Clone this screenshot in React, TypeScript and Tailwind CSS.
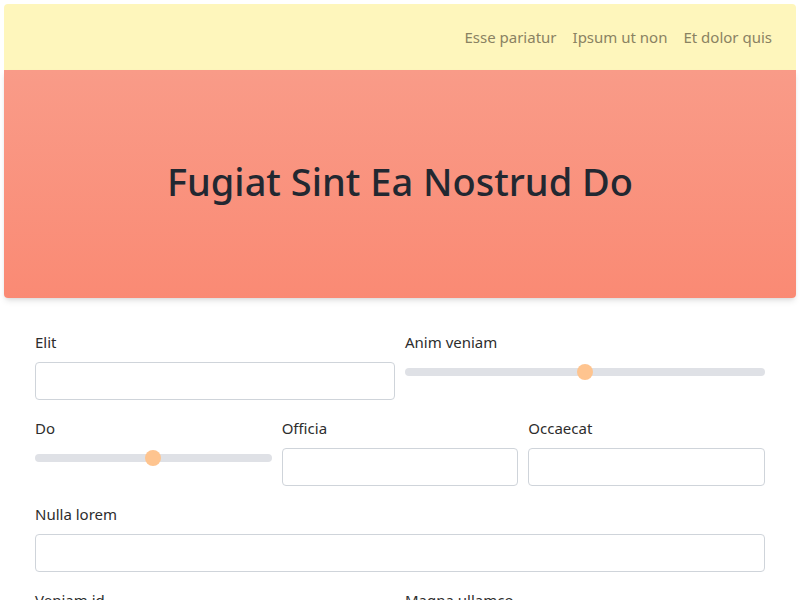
const font = { fontFamily: '"Noto Sans", "Open Sans", sans-serif' };

function Label({ children }: { children: string }) {
  return <label className="block text-[15px] leading-5 text-[#2d2d2d] mb-[10px]">{children}</label>;
}

function TextField({ label }: { label: string }) {
  return (
    <div>
      <Label>{label}</Label>
      <input className="block w-full h-[38px] rounded border border-[#cfd4da] bg-white" />
    </div>
  );
}

function Slider({ label, pct = 50 }: { label: string; pct?: number }) {
  return (
    <div>
      <Label>{label}</Label>
      <div className="relative h-5 flex items-center">
        <div className="h-2 w-full rounded-full bg-[#dfe1e6]" />
        <div
          className="absolute w-4 h-4 rounded-full bg-[#fec48f] -translate-x-1/2"
          style={{ left: `${pct}%` }}
        />
      </div>
    </div>
  );
}

export default function App() {
  return (
    <div className="min-h-[600px] bg-white p-1" style={font}>
      <nav className="h-[66px] bg-[#fef6bc] rounded-t flex items-center justify-end gap-4 pr-6 text-[15px] text-[#8a8262]">
        <a>Esse pariatur</a>
        <a>Ipsum ut non</a>
        <a>Et dolor quis</a>
      </nav>
      <header className="h-[228px] rounded-b bg-gradient-to-b from-[#f99b88] to-[#fa8a74] shadow-md flex items-center justify-center">
        <h1 className="text-[38px] font-medium text-[#222831] leading-none pb-[7px]">Fugiat Sint Ea Nostrud Do</h1>
      </header>
      <form className="px-[31px] pt-[34px] flex flex-col gap-[18px]">
        <div className="grid grid-cols-2 gap-[10px]">
          <TextField label="Elit" />
          <Slider label="Anim veniam" />
        </div>
        <div className="grid grid-cols-3 gap-[10px]">
          <Slider label="Do" />
          <TextField label="Officia" />
          <TextField label="Occaecat" />
        </div>
        <TextField label="Nulla lorem" />
        <div className="grid grid-cols-2 gap-[10px]">
          <TextField label="Veniam id" />
          <TextField label="Magna ullamco" />
        </div>
      </form>
    </div>
  );
}
